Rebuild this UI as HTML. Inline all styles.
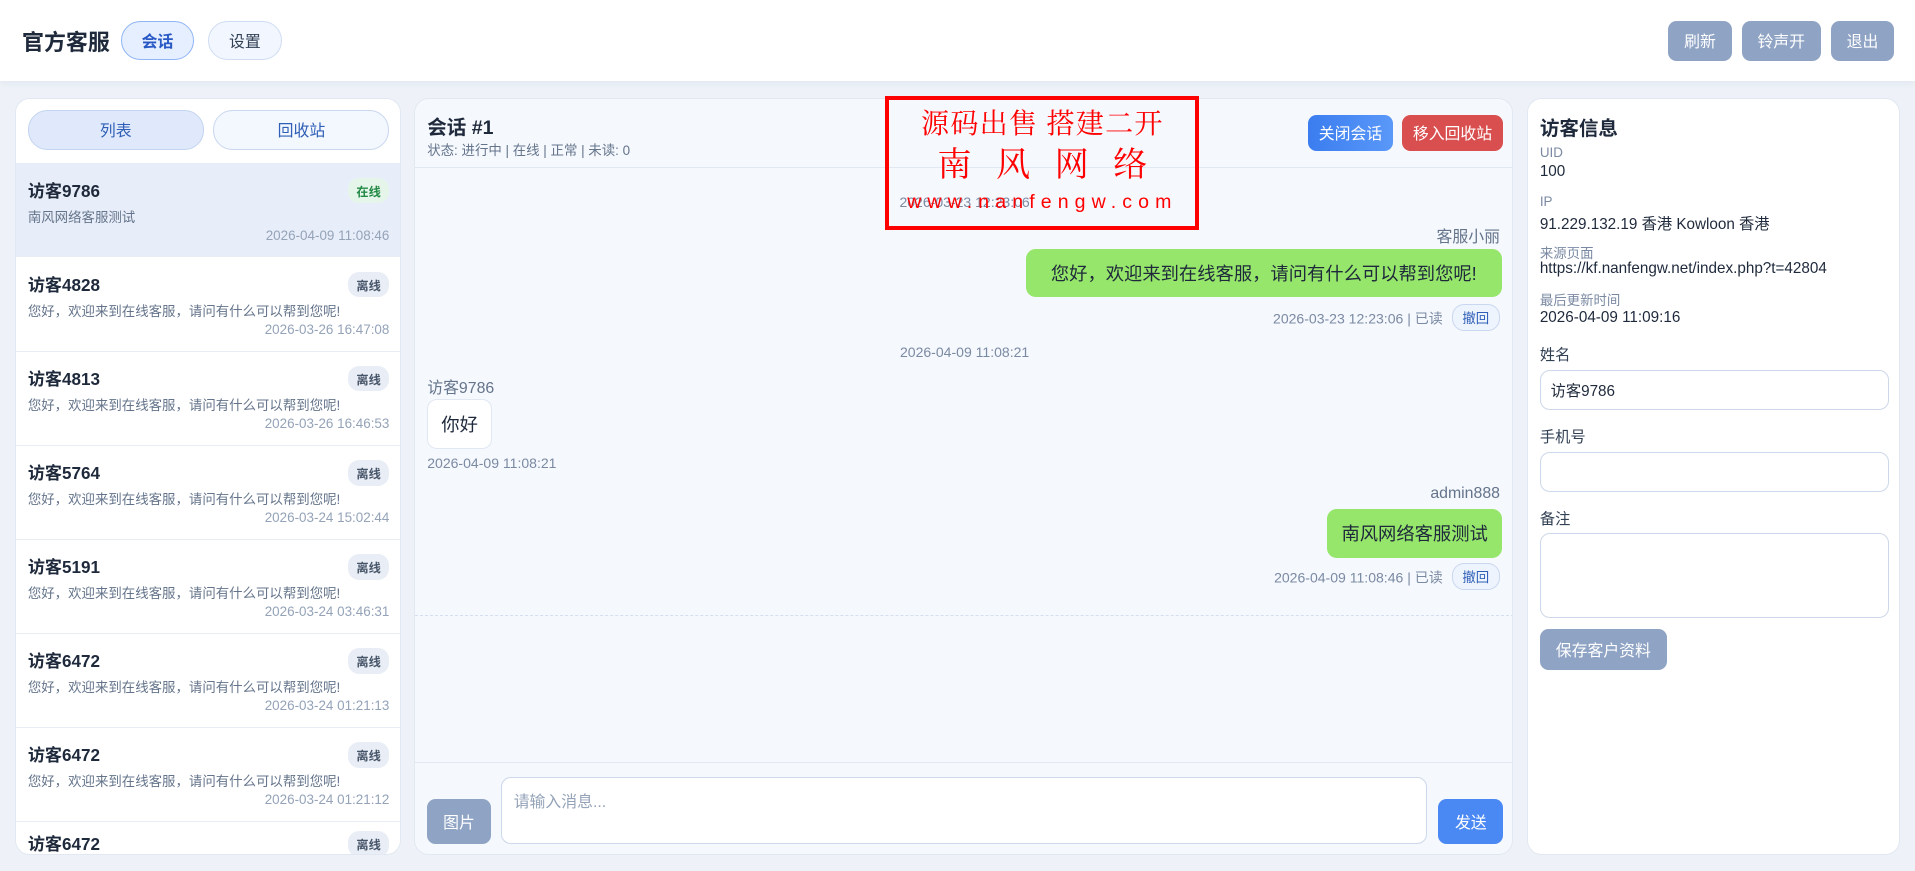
<!DOCTYPE html>
<html><head><meta charset="utf-8"><style>
*{box-sizing:border-box;margin:0;padding:0}
html,body{width:1915px;height:871px;overflow:hidden}
body{background:#eef2f8;font-family:"Liberation Sans","Noto Sans CJK SC",sans-serif;color:#1e293b}
#r{zoom:1.22130;width:1568px;height:713px;position:relative;overflow:hidden}
.a{position:absolute}
.hdr{left:0;top:0;width:1568px;height:66px;background:#fff;box-shadow:0 2px 6px rgba(30,60,120,.06)}
.pill{position:absolute;border-radius:16px;border:1px solid #cfdcf3;background:#f2f6fe;color:#334155;font-size:13px;display:flex;align-items:center;justify-content:center}
.gb{position:absolute;border-radius:7px;background:#8fa3c4;color:#fff;font-size:13px;display:flex;align-items:center;justify-content:center}
.panel{position:absolute;background:#fff;border-radius:12px;border:1px solid #e2e8f2;overflow:hidden}
.item{position:absolute;left:0;width:316px;height:77px;border-bottom:1px solid #e8edf5}
.item .n{position:absolute;left:10px;top:11px;font-weight:bold;font-size:14px;color:#1e293b}
.item .p{position:absolute;left:10px;top:35px;font-size:11px;color:#64748b}
.item .t{position:absolute;right:10px;top:53px;font-size:11px;color:#94a3b8}
.item .b{position:absolute;right:10px;top:12px;font-size:10px;font-weight:bold;color:#475569;background:#e9eef6;border-radius:9px;padding:3px 7px}
.lab{position:absolute;left:10px;font-size:11px;color:#7b8aa3}
.val{position:absolute;left:10px;font-size:12.5px;color:#1e293b}
.inp{position:absolute;left:10px;width:286px;border:1px solid #cdd8ea;border-radius:8px;background:#fff;font-size:12.5px;padding-left:8px;display:flex;align-items:center}
.meta{font-size:11.5px;color:#7b8aa3}
.che{display:inline-block;border:1px solid #c9d7ef;background:#eef4fe;color:#2f5fb6;font-size:11px;border-radius:10px;padding:2px 8px;margin-left:4px}
</style></head><body><div id="r">
<div class="a hdr">
 <div class="a" style="left:18px;top:21px;font-size:18px;font-weight:bold;color:#1e293b">官方客服</div>
 <div class="pill" style="left:99px;top:17px;width:60px;height:32px;background:#e6efff;border-color:#8fb5f5;color:#2859c5;font-weight:bold">会话</div>
 <div class="pill" style="left:170px;top:17px;width:61px;height:32px">设置</div>
 <div class="gb" style="left:1366px;top:17px;width:52px;height:33px">刷新</div>
 <div class="gb" style="left:1426px;top:17px;width:65px;height:33px">铃声开</div>
 <div class="gb" style="left:1499px;top:17px;width:52px;height:33px">退出</div>
</div>

<div class="panel" style="left:12px;top:80px;width:316px;height:620px">
 <div class="pill" style="left:10px;top:9px;width:144px;height:33px;background:#dfe9fb;border-color:#c3d4f0;color:#2f5fb6">列表</div>
 <div class="pill" style="left:162px;top:9px;width:144px;height:33px;background:#f3f7fe;border-color:#c9d7ef;color:#2f5fb6">回收站</div>
 <div class="item" style="top:53px;background:#e8eef9"><div class="n">访客9786</div><div class="b" style="background:#e5f5ea;color:#228a45">在线</div><div class="p">南风网络客服测试</div><div class="t">2026-04-09 11:08:46</div></div>
 <div class="item" style="top:130px"><div class="n">访客4828</div><div class="b">离线</div><div class="p">您好，欢迎来到在线客服，请问有什么可以帮到您呢!</div><div class="t">2026-03-26 16:47:08</div></div>
 <div class="item" style="top:207px"><div class="n">访客4813</div><div class="b">离线</div><div class="p">您好，欢迎来到在线客服，请问有什么可以帮到您呢!</div><div class="t">2026-03-26 16:46:53</div></div>
 <div class="item" style="top:284px"><div class="n">访客5764</div><div class="b">离线</div><div class="p">您好，欢迎来到在线客服，请问有什么可以帮到您呢!</div><div class="t">2026-03-24 15:02:44</div></div>
 <div class="item" style="top:361px"><div class="n">访客5191</div><div class="b">离线</div><div class="p">您好，欢迎来到在线客服，请问有什么可以帮到您呢!</div><div class="t">2026-03-24 03:46:31</div></div>
 <div class="item" style="top:438px"><div class="n">访客6472</div><div class="b">离线</div><div class="p">您好，欢迎来到在线客服，请问有什么可以帮到您呢!</div><div class="t">2026-03-24 01:21:13</div></div>
 <div class="item" style="top:515px"><div class="n">访客6472</div><div class="b">离线</div><div class="p">您好，欢迎来到在线客服，请问有什么可以帮到您呢!</div><div class="t">2026-03-24 01:21:12</div></div>
 <div class="item" style="top:592px;height:28px;border:none"><div class="n" style="top:7px">访客6472</div><div class="b" style="top:8px">离线</div></div>
</div>

<div class="panel" style="left:339px;top:80px;width:900px;height:620px;background:#f5f8fd">
 <div class="a" style="left:0;top:0;width:900px;height:57px;border-bottom:1px solid #e2e8f2"></div>
 <div class="a" style="left:10px;top:10px;font-size:16px;font-weight:bold">会话 #1</div>
 <div class="a" style="left:10px;top:33px;font-size:11px;color:#64748b">状态: 进行中 | 在线 | 正常 | 未读: 0</div>
 <div class="gb" style="left:731px;top:13px;width:70px;height:30px;background:linear-gradient(90deg,#3b7df0,#5a98f8)">关闭会话</div>
 <div class="gb" style="left:808px;top:13px;width:83px;height:30px;background:#d94e4e">移入回收站</div>
 <div class="a meta" style="left:0;width:900px;text-align:center;top:78px">2026-03-23 12:23:06</div>
 <div class="a" style="right:10px;top:103px;font-size:13px;color:#64748b">客服小丽</div>
 <div class="a" style="left:500px;top:123px;width:390px;height:39px;background:#95e66a;border-radius:8px;font-size:15px;display:flex;align-items:center;justify-content:center">您好，欢迎来到在线客服，请问有什么可以帮到您呢!</div>
 <div class="a meta" style="right:10px;top:168px">2026-03-23 12:23:06 | 已读 <span class="che">撤回</span></div>
 <div class="a meta" style="left:0;width:900px;text-align:center;top:201px">2026-04-09 11:08:21</div>
 <div class="a" style="left:10px;top:226px;font-size:13px;color:#64748b">访客9786</div>
 <div class="a" style="left:10px;top:246px;width:53px;height:41px;background:#fff;border:1px solid #e2e8f2;border-radius:8px;font-size:15px;display:flex;align-items:center;justify-content:center">你好</div>
 <div class="a meta" style="left:10px;top:292px">2026-04-09 11:08:21</div>
 <div class="a" style="right:10px;top:316px;font-size:13px;color:#64748b">admin888</div>
 <div class="a" style="left:747px;top:336px;width:143px;height:40px;background:#95e66a;border-radius:8px;font-size:15px;display:flex;align-items:center;justify-content:center">南风网络客服测试</div>
 <div class="a meta" style="right:10px;top:380px">2026-04-09 11:08:46 | 已读 <span class="che">撤回</span></div>
 <div class="a" style="left:0;top:423px;width:900px;border-top:1px dashed #d5dff0"></div>
 <div class="a" style="left:0;top:543px;width:900px;height:77px;border-top:1px solid #e2e8f2"></div>
 <div class="gb" style="left:10px;top:573px;width:52px;height:37px">图片</div>
 <div class="a" style="left:70px;top:555px;width:759px;height:55px;background:#fff;border:1px solid #cdd8ea;border-radius:8px;font-size:13px;color:#94a3b8;padding:9px 10px">请输入消息...</div>
 <div class="gb" style="left:838px;top:573px;width:53px;height:37px;background:#4a88f3">发送</div>
</div>

<div class="a" style="left:725px;top:79px;width:257px;height:109px;border:4px solid #f00;color:#f00;font-family:'Liberation Serif','Noto Serif CJK SC',serif;text-align:center">
 <div style="font-size:23px;line-height:28px;margin-top:6px;letter-spacing:1px">源码出售&nbsp;搭建二开</div>
 <div style="font-size:28px;line-height:36px;letter-spacing:20px;margin-left:20px;margin-top:2px">南风网络</div>
 <div style="font-size:16px;line-height:20px;letter-spacing:5px;margin-top:1px;font-family:'Liberation Sans',sans-serif">www.nanfengw.com</div>
</div>

<div class="panel" style="left:1250px;top:80px;width:306px;height:620px">
 <div class="a" style="left:10px;top:11px;font-size:16px;font-weight:bold">访客信息</div>
 <div class="lab" style="top:38px">UID</div><div class="val" style="top:53px">100</div>
 <div class="lab" style="top:78px">IP</div><div class="val" style="top:93px">91.229.132.19 香港 Kowloon 香港</div>
 <div class="lab" style="top:117px">来源页面</div><div class="val" style="top:132px">https://kf.nanfengw.net/index.php?t=42804</div>
 <div class="lab" style="top:156px">最后更新时间</div><div class="val" style="top:172px">2026-04-09 11:09:16</div>
 <div class="val" style="top:200px;color:#334155">姓名</div>
 <div class="inp" style="top:222px;height:33px">访客9786</div>
 <div class="val" style="top:267px;color:#334155">手机号</div>
 <div class="inp" style="top:289px;height:33px"></div>
 <div class="val" style="top:334px;color:#334155">备注</div>
 <div class="inp" style="top:356px;height:69px"></div>
 <div class="gb" style="left:10px;top:434px;width:104px;height:34px">保存客户资料</div>
</div>
</div></body></html>
